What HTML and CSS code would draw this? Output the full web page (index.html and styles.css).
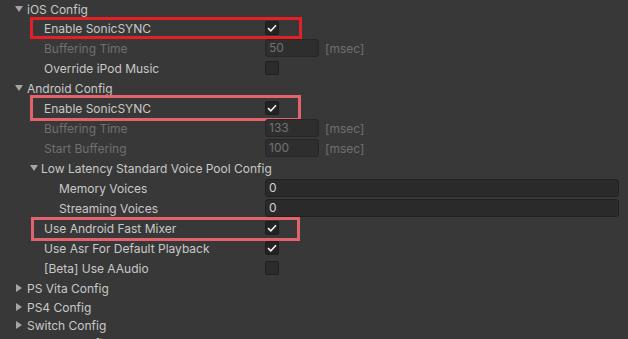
FILE: index.html
```html
<!DOCTYPE html>
<html>
<head>
<meta charset="utf-8">
<link rel="stylesheet" href="styles.css">
</head>
<body>
<div class="inspector">
  <div class="row fold first"><svg class="tri" width="8" height="6" viewBox="0 0 8 6"><path d="M0 0H8L4 6Z"/></svg><span>iOS Config</span></div>
  <div class="row prop">
    <span class="label l1">Enable SonicSYNC</span>
    <span class="ctrl"><span class="check on"><svg width="10" height="8" viewBox="0 0 10 8"><path d="M1 4.2L3.8 6.8L9 1.2"/></svg></span></span>
    <span class="hlbox red"></span>
  </div>
  <div class="row prop dis">
    <span class="label l1">Buffering Time</span>
    <span class="ctrl"><span class="field short">50</span><span class="unit">[msec]</span></span>
  </div>
  <div class="row prop">
    <span class="label l1">Override iPod Music</span>
    <span class="ctrl"><span class="check"></span></span>
  </div>
  <div class="row fold"><svg class="tri" width="8" height="6" viewBox="0 0 8 6"><path d="M0 0H8L4 6Z"/></svg><span>Android Config</span></div>
  <div class="row prop">
    <span class="label l1">Enable SonicSYNC</span>
    <span class="ctrl"><span class="check on"><svg width="10" height="8" viewBox="0 0 10 8"><path d="M1 4.2L3.8 6.8L9 1.2"/></svg></span></span>
    <span class="hlbox pink b2"></span>
  </div>
  <div class="row prop dis">
    <span class="label l1">Buffering Time</span>
    <span class="ctrl"><span class="field short">133</span><span class="unit">[msec]</span></span>
  </div>
  <div class="row prop dis">
    <span class="label l1">Start Buffering</span>
    <span class="ctrl"><span class="field short">100</span><span class="unit">[msec]</span></span>
  </div>
  <div class="row fold sub"><svg class="tri" width="8" height="6" viewBox="0 0 8 6"><path d="M0 0H8L4 6Z"/></svg><span>Low Latency Standard Voice Pool Config</span></div>
  <div class="row prop">
    <span class="label l2">Memory Voices</span>
    <span class="ctrl"><span class="field wide">0</span></span>
  </div>
  <div class="row prop">
    <span class="label l2">Streaming Voices</span>
    <span class="ctrl"><span class="field wide">0</span></span>
  </div>
  <div class="row prop">
    <span class="label l1">Use Android Fast Mixer</span>
    <span class="ctrl"><span class="check on"><svg width="10" height="8" viewBox="0 0 10 8"><path d="M1 4.2L3.8 6.8L9 1.2"/></svg></span></span>
    <span class="hlbox pink b3"></span>
  </div>
  <div class="row prop">
    <span class="label l1">Use Asr For Default Playback</span>
    <span class="ctrl"><span class="check on"><svg width="10" height="8" viewBox="0 0 10 8"><path d="M1 4.2L3.8 6.8L9 1.2"/></svg></span></span>
  </div>
  <div class="row prop">
    <span class="label l1">[Beta] Use AAudio</span>
    <span class="ctrl"><span class="check"></span></span>
  </div>
  <div class="row fold closed"><svg class="tri" width="6" height="8" viewBox="0 0 6 8"><path d="M0 0V8L6 4Z"/></svg><span>PS Vita Config</span></div>
  <div class="row fold closed short-row"><svg class="tri" width="6" height="8" viewBox="0 0 6 8"><path d="M0 0V8L6 4Z"/></svg><span>PS4 Config</span></div>
  <div class="row fold closed short-row"><svg class="tri" width="6" height="8" viewBox="0 0 6 8"><path d="M0 0V8L6 4Z"/></svg><span>Switch Config</span></div>
  <div class="row fold closed short-row"><svg class="tri" width="6" height="8" viewBox="0 0 6 8"><path d="M0 0V8L6 4Z"/></svg><span>WebGL Config</span></div>
</div>
</body>
</html>
```
FILE: styles.css
```css
html, body {
  margin: 0;
  padding: 0;
  background: #383838;
  overflow: hidden;
}
body {
  font-family: Inter, "Noto Sans", sans-serif;
  font-size: 12px;
  color: #c8c8c8;
}
.inspector {
  width: 628px;
  display: flex;
  flex-direction: column;
}
.row {
  position: relative;
  height: 20px;
  display: flex;
  align-items: center;
  white-space: nowrap;
}
.row.first { height: 18px; }
.row.short-row { height: 18px; }
.fold {
  padding-left: 15px;
  gap: 4px;
}
.fold .tri { fill: #a5a5a5; flex: none; }
.fold.closed { padding-left: 16px; gap: 5px; }
.fold.sub { padding-left: 30px; gap: 3px; }
.prop {
  display: grid;
  grid-template-columns: 265px 1fr;
  align-items: center;
}
.label.l1 { padding-left: 44px; }
.label.l2 { padding-left: 59px; }
.ctrl {
  display: flex;
  align-items: center;
  padding-right: 9px;
}
.dis .label, .dis .unit { color: #6f6f6f; }
.check {
  width: 12px;
  height: 12px;
  border: 1px solid #1c1c1c;
  background: #232323;
  border-radius: 2px;
  display: flex;
  align-items: center;
  justify-content: center;
}
.check:not(.on) { background: #2b2b2b; border-color: #212121; }
.check svg path {
  fill: none;
  stroke: #f2f2f2;
  stroke-width: 1.6;
}
.field {
  height: 16px;
  line-height: 16px;
  box-sizing: content-box;
  border: 1px solid #212121;
  border-radius: 3px;
  background: #2a2a2a;
  padding-left: 3px;
  color: #d2d2d2;
}
.field.short { width: 49px; }
.field.wide { flex: 1; }
.dis .field { color: #727272; background: #2e2e2e; border-color: #262626; }
.unit { margin-left: 6px; }
.hlbox {
  position: absolute;
  left: 30px;
  box-sizing: border-box;
  border: 3px solid #e41f26;
  top: -1px;
  height: 22px;
  width: 272px;
  pointer-events: none;
}
.hlbox.pink { border-color: #e2636b; }
.hlbox.b2 { top: -3px; height: 26px; width: 271px; }
.hlbox.b3 { left: 31px; top: -1px; height: 24px; width: 269px; }
```
